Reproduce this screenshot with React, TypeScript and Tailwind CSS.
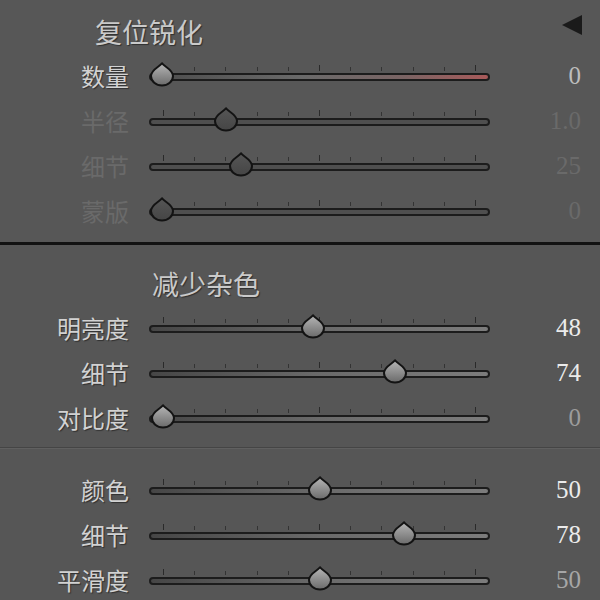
import React from "react";

type Row = {
  label: string;
  value: string;
  pos: number; // thumb center offset from slider left
  labelDim?: boolean;
  valueColor: string;
  disabled?: boolean;
  red?: boolean;
};

const TICKS = Array.from({ length: 11 }, (_, i) => i);

function Thumb({ dim }: { dim?: boolean }) {
  const id = dim ? "thumbDim" : "thumbLight";
  return (
    <svg width="26" height="25" viewBox="0 0 26 25">
      <defs>
        <linearGradient id={id} x1="0" y1="0" x2="0" y2="1">
          {dim ? (
            <>
              <stop offset="0" stopColor="#565656" />
              <stop offset="1" stopColor="#454545" />
            </>
          ) : (
            <>
              <stop offset="0" stopColor="#b6b6b6" />
              <stop offset="1" stopColor="#6a6a6a" />
            </>
          )}
        </linearGradient>
      </defs>
      <path
        d="M13 1.2 C15 4.5 24 7.5 24 14 A11 9.6 0 0 1 2 14 C2 7.5 11 4.5 13 1.2 Z"
        fill={`url(#${id})`}
        stroke="#131313"
        strokeWidth="2"
        strokeLinejoin="round"
      />
    </svg>
  );
}

function Slider({ pos, disabled, red }: { pos: number; disabled?: boolean; red?: boolean }) {
  const fill = red
    ? "bg-[linear-gradient(to_right,#4c4c4c,#6a6a6a_45%,#7a6464_75%,#a85a5a)]"
    : disabled
    ? "bg-[#4f4f4f]"
    : "bg-[linear-gradient(to_right,#464646,#6a6a6a_50%,#7c7c7c)]";
  return (
    <div className="relative w-[341px] h-[45px] shrink-0">
      <div className="absolute left-[14px] top-[12px] w-[313px] h-[6px]">
        {TICKS.map((i) => (
          <div
            key={i}
            className={`absolute bottom-0 w-px ${i % 5 === 0 ? "h-[6px] bg-[#2a2a2a]" : "h-[4px] bg-[#333333]"}`}
            style={{ left: `${i * 31.2}px` }}
          />
        ))}
      </div>
      <div className={`absolute left-0 right-0 top-[20px] h-[8px] rounded-full border-2 border-[#1c1c1c] ${fill}`} />
      <div className="absolute top-[9px]" style={{ left: `${pos - 13}px` }}>
        <Thumb dim={disabled} />
      </div>
    </div>
  );
}

function SliderRow({ r }: { r: Row }) {
  return (
    <div className="flex items-center h-[45px]">
      <div
        className={`w-[129px] shrink-0 text-right text-[24px] leading-[45px] ${
          r.labelDim ? "text-[#6a6a6a]" : "text-[#d2d2d2] [text-shadow:1px_1px_1px_rgba(0,0,0,0.45)]"
        }`}
      >
        {r.label}
      </div>
      <div className="w-[20px] shrink-0" />
      <Slider pos={r.pos} disabled={r.disabled} red={r.red} />
      <div
        className="w-[91px] shrink-0 text-right text-[25px] leading-[45px]"
        style={{ fontFamily: '"Liberation Serif", "Times New Roman", serif', color: r.valueColor }}
      >
        {r.value}
      </div>
    </div>
  );
}

const sharpen: Row[] = [
  { label: "数量", value: "0", pos: 13, valueColor: "#bdbdbd", red: true },
  { label: "半径", value: "1.0", pos: 77, labelDim: true, valueColor: "#6a6a6a", disabled: true },
  { label: "细节", value: "25", pos: 92, labelDim: true, valueColor: "#6a6a6a", disabled: true },
  { label: "蒙版", value: "0", pos: 13, labelDim: true, valueColor: "#6a6a6a", disabled: true },
];

const noise: Row[] = [
  { label: "明亮度", value: "48", pos: 164, valueColor: "#ebebeb" },
  { label: "细节", value: "74", pos: 246, valueColor: "#ebebeb" },
  { label: "对比度", value: "0", pos: 14, valueColor: "#9c9c9c" },
];

const color: Row[] = [
  { label: "颜色", value: "50", pos: 171, valueColor: "#ebebeb" },
  { label: "细节", value: "78", pos: 255, valueColor: "#ebebeb" },
  { label: "平滑度", value: "50", pos: 171, valueColor: "#a6a6a6" },
];

export default function App() {
  return (
    <div
      className="w-[600px] h-[600px] overflow-hidden bg-[#575757]"
      style={{ fontFamily: '"Noto Sans CJK SC", "Noto Sans", sans-serif' }}
    >
      <div className="flex items-start justify-between h-[53px]">
        <div className="ml-[95px] mt-[16px] text-[27px] leading-[32px] text-[#cacaca] [text-shadow:1px_1px_1px_rgba(0,0,0,0.45)]">
          复位锐化
        </div>
        <svg className="mr-[18px] mt-[15px]" width="20" height="20" viewBox="0 0 20 20">
          <path d="M0 10 L20 0 L20 20 Z" fill="#1a1a1a" />
        </svg>
      </div>
      {sharpen.map((r, i) => (
        <SliderRow key={i} r={r} />
      ))}
      <div className="h-[9px]" />
      <div className="h-[3px] bg-[#121212]" />
      <div className="h-[60px] bg-[#565656]">
        <div className="ml-[152px] pt-[23px] text-[27px] leading-[32px] text-[#cacaca] [text-shadow:1px_1px_1px_rgba(0,0,0,0.45)]">
          减少杂色
        </div>
      </div>
      <div className="bg-[#565656]">
        {noise.map((r, i) => (
          <SliderRow key={i} r={r} />
        ))}
        <div className="h-[7px]" />
      </div>
      <div className="h-px bg-[#454545]" />
      <div className="h-px bg-[#606060]" />
      <div className="bg-[#565656]">
        <div className="h-[18px]" />
        {color.map((r, i) => (
          <SliderRow key={i} r={r} />
        ))}
      </div>
    </div>
  );
}
